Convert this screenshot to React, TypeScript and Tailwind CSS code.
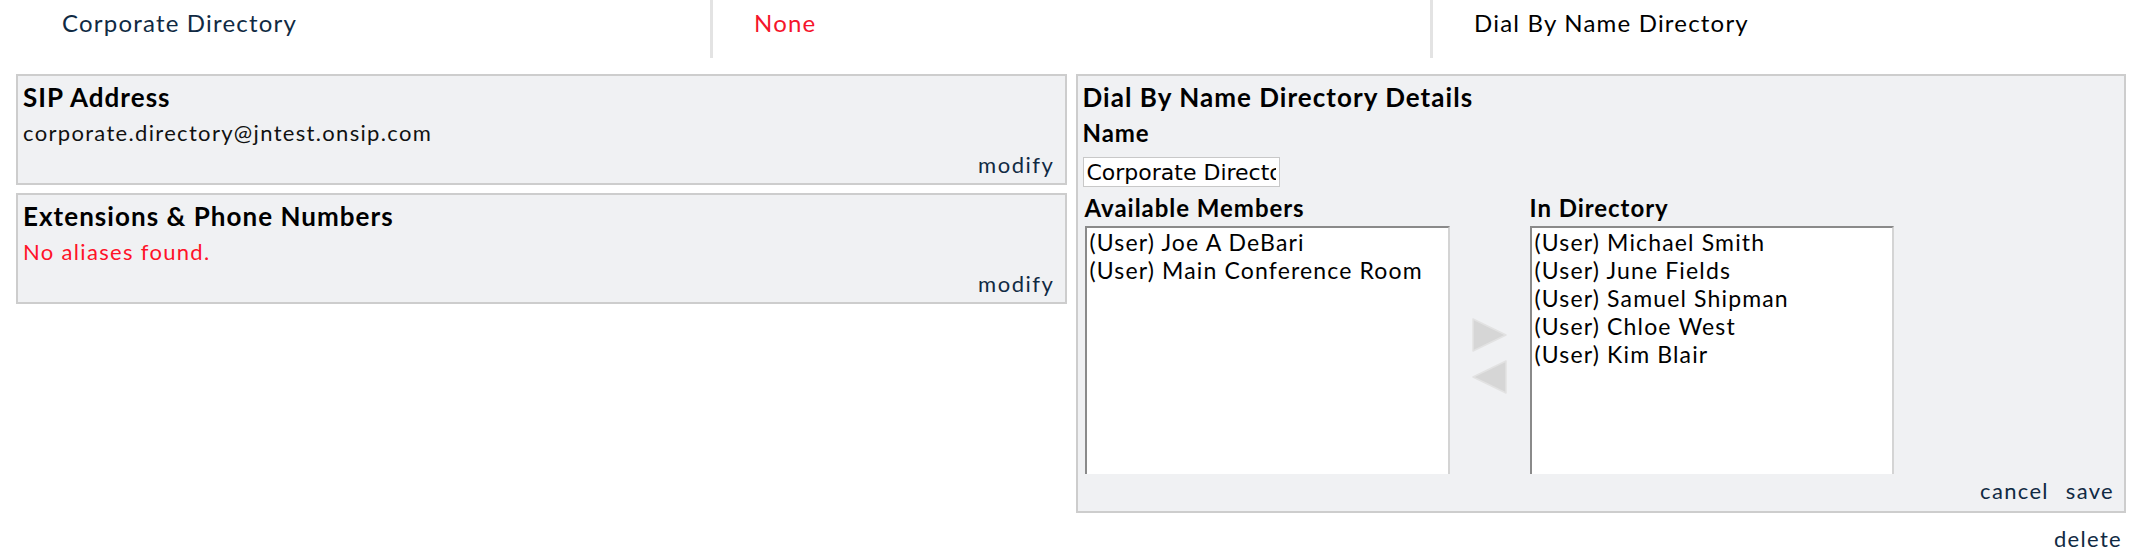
import { ReactNode } from 'react';

const font = { fontFamily: 'Lato, "Open Sans", sans-serif' };

function InfoPanel({ title, children }: { title: string; children: ReactNode }) {
  return (
    <div className="border-2 border-[#cdcdcd] bg-[#f0f1f3] px-[5px] pt-[3px] pb-[4px]">
      <div className="text-[26px] leading-[36px] font-bold tracking-[0.04em] text-black">{title}</div>
      {children}
      <div className="text-right pr-[5px] text-[22px] leading-[28px] tracking-[0.07em] text-[#102a43]">modify</div>
    </div>
  );
}

function ListBox({ items }: { items: string[] }) {
  return (
    <div className="h-[248px] overflow-hidden bg-white border-l-2 border-t-2 border-r-2 border-l-[#8a8a8a] border-t-[#8a8a8a] border-r-[#d4d4d4] pl-[3px]">
      {items.map((it) => (
        <div key={it} className="whitespace-nowrap text-[23px] leading-[28px] tracking-[0.05em] text-black">
          {it}
        </div>
      ))}
    </div>
  );
}

function Arrow({ dir }: { dir: 'right' | 'left' }) {
  return (
    <svg width="35" height="34" viewBox="0 0 35 34">
      {dir === 'right' ? (
        <polygon points="1,1 34,17 1,33" fill="#d6d6d6" stroke="#e2e2e2" strokeWidth="1.5" strokeLinejoin="round" />
      ) : (
        <polygon points="34,1 1,17 34,33" fill="#d6d6d6" stroke="#e2e2e2" strokeWidth="1.5" strokeLinejoin="round" />
      )}
    </svg>
  );
}

export default function App() {
  return (
    <div className="w-[2156px] h-[558px] bg-white" style={font}>
      {/* header row */}
      <div className="flex h-[58px] text-[24px] leading-[30px] tracking-[0.05em]">
        <div className="w-[710px] pl-[62px] pt-[8px] text-[#102a43]">Corporate Directory</div>
        <div className="w-[720px] border-l-[3px] border-[#e3e3e3] pl-[41px] pt-[8px] text-[#f5142b]">None</div>
        <div className="flex-1 border-l-[3px] border-[#e3e3e3] pl-[41px] pt-[8px] text-black">Dial By Name Directory</div>
      </div>

      <div className="mt-[16px] pl-[16px] pr-[30px] grid grid-cols-2 gap-[9px] items-start">
        <div className="flex flex-col gap-[8px]">
          <InfoPanel title="SIP Address">
            <div className="text-[22px] leading-[36px] tracking-[0.06em] text-[#111]">corporate.directory@jntest.onsip.com</div>
          </InfoPanel>
          <InfoPanel title="Extensions & Phone Numbers">
            <div className="text-[22px] leading-[36px] tracking-[0.06em] text-[#ff1228]">No aliases found.</div>
          </InfoPanel>
        </div>

        <div className="border-2 border-[#cdcdcd] bg-[#f0f1f3] pl-[5px] pr-[10px] pt-[3px] pb-[6px]">
          <div className="text-[26px] leading-[36px] font-bold tracking-[0.04em] text-black">Dial By Name Directory Details</div>
          <div className="text-[24px] leading-[36px] font-bold tracking-[0.04em] text-black">Name</div>
          <input
            readOnly
            value="Corporate Directory"
            className="block mt-[6px] w-[197px] h-[30px] bg-white border border-[#c8c8c8] px-[3px] text-[22px] leading-[28px] text-black outline-none"
            style={{ fontFamily: '"DejaVu Sans", sans-serif' }}
          />
          <div className="mt-[3px] flex pl-[2px]">
            <div className="w-[365px]">
              <div className="text-[24px] leading-[36px] font-bold tracking-[0.04em] text-black">Available Members</div>
              <ListBox items={['(User) Joe A DeBari', '(User) Main Conference Room']} />
            </div>
            <div className="w-[80px] pt-[48px] flex flex-col items-center justify-center gap-[8px]">
              <Arrow dir="right" />
              <Arrow dir="left" />
            </div>
            <div className="w-[364px]">
              <div className="text-[24px] leading-[36px] font-bold tracking-[0.04em] text-black">In Directory</div>
              <ListBox
                items={[
                  '(User) Michael Smith',
                  '(User) June Fields',
                  '(User) Samuel Shipman',
                  '(User) Chloe West',
                  '(User) Kim Blair',
                ]}
              />
            </div>
          </div>
          <div className="mt-[3px] flex justify-end gap-[17px] text-[22px] leading-[28px] tracking-[0.06em] text-[#102a43]">
            <span>cancel</span>
            <span>save</span>
          </div>
        </div>
      </div>

      <div className="mt-[12px] pr-[34px] text-right text-[22px] leading-[28px] tracking-[0.06em] text-[#102a43]">delete</div>
    </div>
  );
}
